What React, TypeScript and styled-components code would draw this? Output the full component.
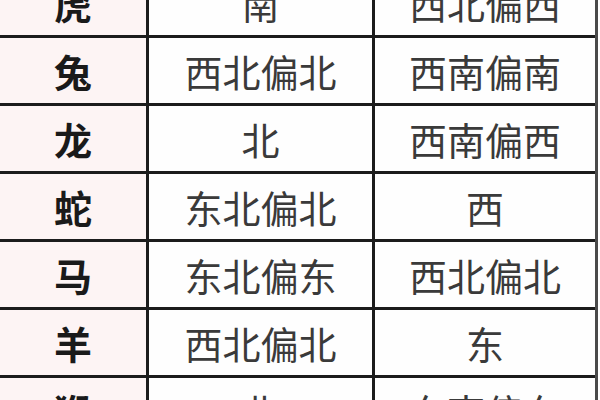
import React from 'react'
import styled, { createGlobalStyle } from 'styled-components'

const GlobalStyle = createGlobalStyle`
  html, body {
    margin: 0;
    padding: 0;
    background: #ffffff;
    overflow: hidden;
  }
`

const Frame = styled.div`
  width: 600px;
  height: 400px;
  overflow: hidden;
  background: #ffffff;
`

const Grid = styled.div`
  margin-top: -30px;
  width: 595px;
  display: grid;
  grid-template-columns: 146px 223px 220px;
  grid-auto-rows: 65px;
  gap: 3px;
  background: #1c1c1c;
  border-right: 3px solid #4a4a4a;
  font-family: "Noto Sans CJK SC", "Noto Sans", sans-serif;
`

const Cell = styled.div<{ $head?: boolean }>`
  display: flex;
  align-items: center;
  justify-content: center;
  background: ${(p) => (p.$head ? '#fdf4f4' : '#fefefe')};
  color: ${(p) => (p.$head ? '#1a1a1a' : '#3a3a3a')};
  font-size: 38px;
  font-weight: ${(p) => (p.$head ? 700 : 400)};
  line-height: 1;
`

const rows: [string, string, string][] = [
  ['虎', '南', '西北偏西'],
  ['兔', '西北偏北', '西南偏南'],
  ['龙', '北', '西南偏西'],
  ['蛇', '东北偏北', '西'],
  ['马', '东北偏东', '西北偏北'],
  ['羊', '西北偏北', '东'],
  ['猴', '北', '东南偏东'],
]

const App: React.FC = () => (
  <Frame>
    <GlobalStyle />
    <Grid>
      {rows.map(([animal, a, b]) => (
        <React.Fragment key={animal}>
          <Cell $head>{animal}</Cell>
          <Cell>{a}</Cell>
          <Cell>{b}</Cell>
        </React.Fragment>
      ))}
    </Grid>
  </Frame>
)

export default App
